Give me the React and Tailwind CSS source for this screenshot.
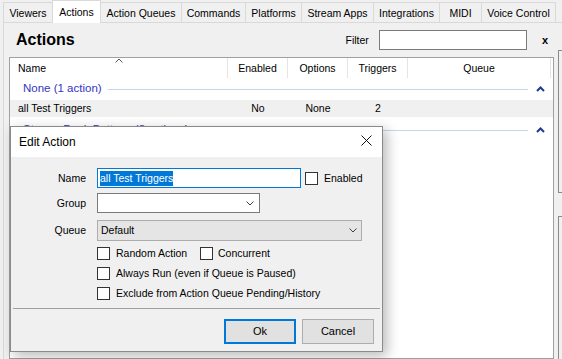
import React from "react";

const tabs = [
  { label: "Viewers", w: "w-[49px]" },
  { label: "Actions", w: "w-[49px]", sel: true },
  { label: "Action Queues", w: "w-[80px]" },
  { label: "Commands", w: "w-[64px]" },
  { label: "Platforms", w: "w-[56px]" },
  { label: "Stream Apps", w: "w-[72px]" },
  { label: "Integrations", w: "w-[66px]" },
  { label: "MIDI", w: "w-[42px]" },
  { label: "Voice Control", w: "w-[75px]", last: true },
];

function ComboChevron() {
  return (
    <svg width="8" height="5" viewBox="0 0 8 5" className="shrink-0">
      <path d="M0.5 0.5 L4 4 L7.5 0.5" fill="none" stroke="#404040" strokeWidth="1" />
    </svg>
  );
}

function GroupChevron() {
  return (
    <svg width="9" height="6" viewBox="0 0 9 6" className="shrink-0">
      <path d="M1 5 L4.5 1.5 L8 5" fill="none" stroke="#1c3a94" strokeWidth="2" />
    </svg>
  );
}

function Check() {
  return <div className="w-[13px] h-[13px] border border-[#333333] bg-white shrink-0" />;
}

function GroupRow({ label, h }) {
  return (
    <div className={`flex items-center ${h} pl-[13px]`}>
      <span className="text-[#3434c4] text-[11.5px] whitespace-nowrap">{label}</span>
      <div className="flex-1 h-px bg-[#c8d3ec] ml-[6px]" />
      <div className="ml-[8px] mr-[8px]">
        <GroupChevron />
      </div>
    </div>
  );
}

function ItemRow({ name, enabled, options, triggers, bg }) {
  return (
    <div className={`flex items-center h-[17px] ${bg}`}>
      <div className="w-[218px] pl-[8px]">{name}</div>
      <div className="w-[60px] text-center">{enabled}</div>
      <div className="w-[60px] text-center">{options}</div>
      <div className="w-[60px] text-center">{triggers}</div>
      <div className="w-[143px]" />
    </div>
  );
}

export default function App() {
  return (
    <div className="relative w-[562px] h-[359px] overflow-hidden bg-[#f0f0f0] text-black font-['Liberation_Sans',Arial,sans-serif] text-[10.5px] leading-none flex flex-col">
      {/* Tabs */}
      <div className="flex items-end h-[22px] pl-[3px] relative z-10 shrink-0">
        {tabs.map((t, i) => {
          const prevSel = i > 0 && tabs[i - 1].sel;
          if (t.sel) {
            return (
              <div
                key={t.label}
                className={`${t.w} h-[23px] mb-[-1px] bg-white border-t border-l border-r border-[#d9d9d9] flex items-center justify-center`}
              >
                {t.label}
              </div>
            );
          }
          return (
            <div
              key={t.label}
              className={`${t.w} h-[20px] pt-[2px] bg-[#f0f0f0] border-t border-[#d9d9d9] ${prevSel ? "" : "border-l"} ${t.last ? "border-r" : ""} flex items-center justify-center whitespace-nowrap`}
            >
              {t.label}
            </div>
          );
        })}
      </div>

      {/* Tab panel */}
      <div className="flex-1 ml-[3px] border-l border-t border-[#d9d9d9] flex min-h-0">
        {/* Left column */}
        <div className="w-[551px] shrink-0 flex flex-col">
          <div className="h-[34px] flex items-center pl-[12px] shrink-0">
            <span className="font-bold text-[16px]">Actions</span>
            <div className="ml-auto flex items-center">
              <span>Filter</span>
              <div className="ml-[10px] w-[148px] h-[20px] bg-white border border-[#7a7a7a]" />
              <span className="ml-[15px] mr-[7px] font-bold text-[11px]">x</span>
            </div>
          </div>

          {/* List view */}
          <div className="ml-[5px] w-[545px] flex-1 border border-[#a0a0a0] bg-white overflow-hidden">
            <div className="relative flex h-[20px] items-center">
              <div className="w-[218px] h-full pl-[8px] flex items-center border-r border-[#e5e5e5] relative">
                Name
                <svg width="8" height="5" viewBox="0 0 8 5" className="absolute top-0 left-[105px]">
                  <path d="M0.5 4.5 L4 1 L7.5 4.5" fill="none" stroke="#555" strokeWidth="1" />
                </svg>
              </div>
              <div className="w-[60px] h-full flex items-center justify-center border-r border-[#e5e5e5]">Enabled</div>
              <div className="w-[60px] h-full flex items-center justify-center border-r border-[#e5e5e5]">Options</div>
              <div className="w-[60px] h-full flex items-center justify-center border-r border-[#e5e5e5]">Triggers</div>
              <div className="w-[143px] h-full flex items-center justify-center border-r border-[#e5e5e5]">Queue</div>
            </div>
            <GroupRow label="None (1 action)" h="h-[22px]" />
            <ItemRow name="all Test Triggers" enabled="No" options="None" triggers="2" bg="bg-[#f0f0f0]" />
            <GroupRow label="Stream Deck Buttons (3 actions)" h="h-[26px]" />
          </div>
        </div>

        {/* Right column (cut off) */}
        <div className="ml-[3px] flex-1 flex flex-col">
          <div className="mt-[27px] h-[143px] border-l border-t border-b border-[#8a8a8a]" />
          <div className="mt-[23px] flex-1 border-l border-t border-[#8a8a8a]" />
        </div>
      </div>

      {/* Edit Action dialog */}
      <div className="absolute left-[10px] top-[126px] w-[373px] h-[226px] z-20 border border-[#8a8a8a] bg-[#f0f0f0] shadow-[4px_4px_12px_rgba(0,0,0,0.28)] flex flex-col">
        <div className="h-[30px] bg-white flex items-center justify-between shrink-0">
          <span className="pl-[8px] text-[12px]">Edit Action</span>
          <svg width="11" height="11" viewBox="0 0 11 11" className="mr-[10px] self-start mt-[8px]">
            <path d="M0.5 0.5 L10.5 10.5 M10.5 0.5 L0.5 10.5" stroke="#111" strokeWidth="1" />
          </svg>
        </div>

        <div className="pt-[11px] flex flex-col">
          {/* Name */}
          <div className="flex items-center h-[20px]">
            <div className="w-[75px] text-right">Name</div>
            <div className="ml-[11px] w-[204px] h-[20px] bg-white border border-[#0078d7] flex items-center pl-[2px]">
              <span className="bg-[#0078d7] text-white h-[15px] flex items-center">all Test Triggers</span>
            </div>
            <div className="ml-[4px]">
              <Check />
            </div>
            <span className="ml-[6px]">Enabled</span>
          </div>
          {/* Group */}
          <div className="flex items-center h-[20px] mt-[5px]">
            <div className="w-[75px] text-right">Group</div>
            <div className="ml-[11px] w-[163px] h-[20px] bg-white border border-[#7a7a7a] flex items-center justify-end pr-[5px]">
              <ComboChevron />
            </div>
          </div>
          {/* Queue */}
          <div className="flex items-center h-[21px] mt-[7px]">
            <div className="w-[75px] text-right">Queue</div>
            <div className="ml-[11px] w-[265px] h-[21px] bg-[#e5e5e5] border border-[#adadad] flex items-center justify-between pl-[3px] pr-[4px]">
              <span>Default</span>
              <ComboChevron />
            </div>
          </div>
          {/* Checkboxes */}
          <div className="flex items-center h-[13px] mt-[6px] pl-[86px]">
            <div className="w-[103px] flex items-center">
              <Check />
              <span className="ml-[6px] whitespace-nowrap">Random Action</span>
            </div>
            <Check />
            <span className="ml-[5px]">Concurrent</span>
          </div>
          <div className="flex items-center h-[13px] mt-[7px] pl-[86px]">
            <Check />
            <span className="ml-[6px]">Always Run (even if Queue is Paused)</span>
          </div>
          <div className="flex items-center h-[13px] mt-[7px] pl-[86px]">
            <Check />
            <span className="ml-[6px]">Exclude from Action Queue Pending/History</span>
          </div>

          <div className="mt-[8px] mx-[2px] h-px bg-[#a0a0a0]" />

          <div className="mt-[10px] flex justify-end gap-[6px] pr-[8px]">
            <div className="w-[72px] h-[25px] bg-[#e1e1e1] border-2 border-[#0078d7] flex items-center justify-center text-[11px]">
              Ok
            </div>
            <div className="w-[72px] h-[25px] bg-[#e1e1e1] border border-[#adadad] flex items-center justify-center text-[11px]">
              Cancel
            </div>
          </div>
        </div>
      </div>
    </div>
  );
}
